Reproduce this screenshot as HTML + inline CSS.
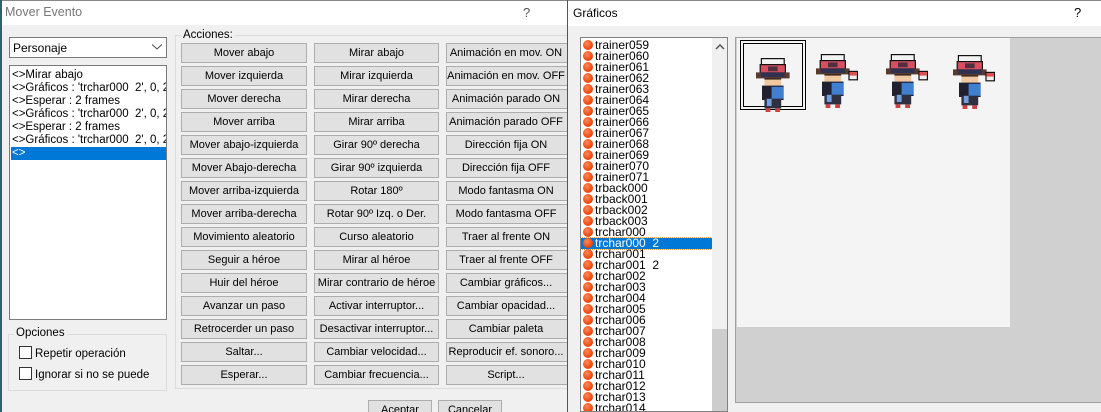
<!DOCTYPE html>
<html style="overflow:hidden;width:1101px;height:412px"><head><meta charset="utf-8"><style>
*{box-sizing:border-box;margin:0;padding:0}
body{width:1101px;height:412px;overflow:hidden;background:#f0f0f0;font-family:"Liberation Sans",sans-serif;font-size:12px;color:#000;position:relative}
.abs{position:absolute}
.btn{position:absolute;height:20px;background:#e1e1e1;border:1px solid #adadad;text-align:center;line-height:18px;font-size:11px;white-space:nowrap;overflow:hidden}
.li{height:13px;line-height:13px;white-space:nowrap}
.ri{height:11px;line-height:11px;white-space:nowrap;padding-left:2px;position:relative}
.ri i{display:inline-block;width:10px;height:10px;border-radius:50%;background:radial-gradient(circle at 40% 35%,#ff8a5a,#f04a10 60%,#c83000);vertical-align:-1px;margin-right:2px}
.cb{display:inline-block;width:13px;height:13px;border:1px solid #333;background:#fff;vertical-align:-2px;margin-right:3px}
</style></head><body>
<div class="abs" style="left:0;top:0;width:2px;height:412px;background:#2a6470"></div>
<div class="abs" style="left:2px;top:0;width:566px;height:25px;background:#fff;border-top:1px solid #888"></div>
<div class="abs" style="left:5px;top:5px;font-size:12.5px;color:#777">Mover Evento</div>
<div class="abs" style="left:523px;top:5px;font-size:13px;color:#555">?</div>

<div class="abs" style="left:9px;top:37px;width:158px;height:21px;background:#fff;border:1px solid #7a7a7a;padding:3px 3px;font-size:12px">Personaje
<svg class="abs" style="right:4px;top:6px" width="10" height="6"><path d="M0 0.5 L5 5 L10 0.5" stroke="#444" fill="none"/></svg></div>
<div class="abs" style="left:9px;top:65px;width:158px;height:255px;background:#fff;border:1px solid #7a7a7a;padding:3px 0 0 2px;font-size:11.5px;overflow:hidden">
<div class="li">&lt;&gt;Mirar abajo</div>
<div class="li">&lt;&gt;Gráficos : 'trchar000&nbsp; 2', 0, 2</div>
<div class="li">&lt;&gt;Esperar : 2 frames</div>
<div class="li">&lt;&gt;Gráficos : 'trchar000&nbsp; 2', 0, 2</div>
<div class="li">&lt;&gt;Esperar : 2 frames</div>
<div class="li">&lt;&gt;Gráficos : 'trchar000&nbsp; 2', 0, 2</div>
<div class="li" style="background:#0078d7;color:#fff;margin-left:-1px;padding-left:1px;width:155px">&lt;&gt;</div>
</div>

<div class="abs" style="left:8px;top:334px;width:159px;height:57px;border:1px solid #dcdcdc"></div>
<div class="abs" style="left:14px;top:327px;background:#f0f0f0;padding:0 2px;font-size:11.5px">Opciones</div>
<div class="abs" style="left:19px;top:346px;font-size:11.5px"><span class="cb"></span>Repetir operación</div>
<div class="abs" style="left:19px;top:367px;font-size:11.5px"><span class="cb"></span>Ignorar si no se puede</div>

<div class="abs" style="left:175px;top:35px;width:400px;height:354px;border:1px solid #dcdcdc"></div>
<div class="abs" style="left:181px;top:29px;background:#f0f0f0;padding:0 2px;font-size:11.5px">Acciones:</div>

<div id="btns"></div>

<div class="btn" style="left:368px;top:400px;width:64px;height:22px">Aceptar</div>
<div class="btn" style="left:438px;top:400px;width:64px;height:22px">Cancelar</div>

<div class="abs" style="left:567px;top:0;width:534px;height:412px;background:#f0f0f0;border-left:1px solid #555"></div>
<div class="abs" style="left:568px;top:0;width:533px;height:26px;background:#fff;border-top:1px solid #888"></div>
<div class="abs" style="left:573px;top:6px;font-size:12px">Gráficos</div>
<div class="abs" style="left:1074px;top:5px;font-size:13px">?</div>

<div class="abs" style="left:580px;top:37px;width:148px;height:375px;background:#fff;border:1px solid #828282;overflow:hidden">
<div class="abs" style="left:0;top:2px;width:131px;font-size:12px" id="rl"></div>
<div class="abs" style="left:131px;top:0;width:16px;height:380px;background:#f0f0f0"></div>
<svg class="abs" style="left:134px;top:6px" width="10" height="6"><path d="M1 5 L5 1 L9 5" stroke="#555" stroke-width="1.5" fill="none"/></svg>
<div class="abs" style="left:131px;top:291px;width:16px;height:90px;background:#cdcdcd"></div>
</div>

<div class="abs" style="left:735px;top:37px;width:366px;height:366px;background:#d0d0d0;border-top:1px solid #a0a0a0;border-left:1px solid #a0a0a0"></div>
<div class="abs" style="left:737px;top:38px;width:273px;height:289px;background:#f4f4f4"></div>
<div class="abs" style="left:740px;top:40px;width:66px;height:70px;border:1px solid #000;padding:2px"><div style="width:100%;height:100%;border:1px solid #000"></div></div>
<div class="abs" style="left:735px;top:402px;width:366px;height:10px;background:#f0f0f0;border-top:1px solid #a0a0a0"></div>

<svg class="abs" style="left:0;top:0" width="1101" height="412">
<defs>
<g id="sp">
<rect x="4" y="0" width="20" height="6" fill="#111"/>
<rect x="5" y="1" width="18" height="5" fill="#f2f2f2"/>
<rect x="3" y="5" width="22" height="8" fill="#111"/>
<rect x="4" y="6" width="20" height="6" fill="#d85060"/>
<rect x="10" y="7" width="8" height="4" fill="#503040"/>
<rect x="0" y="12" width="28" height="5" fill="#5a3a2a"/>
<rect x="4" y="12" width="20" height="4" fill="#303050"/>
<rect x="7" y="16" width="14" height="7" fill="#f0c8a0"/>
<rect x="7" y="16" width="14" height="2" fill="#402820"/>
<rect x="5" y="23" width="18" height="12" fill="#202030"/>
<rect x="13" y="24" width="10" height="10" fill="#4080d0"/>
<rect x="7" y="34" width="14" height="8" fill="#303040"/>
<rect x="9" y="34" width="4" height="6" fill="#70a0e0"/>
<rect x="8" y="42" width="4" height="3" fill="#d04040"/>
<rect x="16" y="42" width="4" height="3" fill="#d04040"/>
</g>
<g id="sp2">
<use href="#sp"/>
<rect x="27" y="14" width="8" height="8" fill="#111"/>
<rect x="28" y="15" width="6" height="6" fill="#f0f0f0"/>
<rect x="28" y="15" width="6" height="3" fill="#e05050"/>
</g>
</defs>
<use href="#sp" transform="translate(756,58) scale(1.2)"/>
<use href="#sp2" transform="translate(816,54) scale(1.2)"/>
<use href="#sp2" transform="translate(886,54) scale(1.2)"/>
<use href="#sp2" transform="translate(953,55) scale(1.2)"/>
</svg>

<script>
var c1=["Mover abajo","Mover izquierda","Mover derecha","Mover arriba","Mover abajo-izquierda","Mover Abajo-derecha","Mover arriba-izquierda","Mover arriba-derecha","Movimiento aleatorio","Seguir a héroe","Huir del héroe","Avanzar un paso","Retrocerder un paso","Saltar...","Esperar..."];
var c2=["Mirar abajo","Mirar izquierda","Mirar derecha","Mirar arriba","Girar 90º derecha","Girar 90º izquierda","Rotar 180º","Rotar 90º Izq. o Der.","Curso aleatorio","Mirar al héroe","Mirar contrario de héroe","Activar interruptor...","Desactivar interruptor...","Cambiar velocidad...","Cambiar frecuencia..."];
var c3=["Animación en mov. ON","Animación en mov. OFF","Animación parado ON","Animación parado OFF","Dirección fija ON","Dirección fija OFF","Modo fantasma ON","Modo fantasma OFF","Traer al frente ON","Traer al frente OFF","Cambiar gráficos...","Cambiar opacidad...","Cambiar paleta","Reproducir ef. sonoro...","Script..."];
var h="";
for(var i=0;i<15;i++){var y=43+i*23;
h+='<div class="btn" style="left:181px;top:'+y+'px;width:126px">'+c1[i]+'</div>';
h+='<div class="btn" style="left:314px;top:'+y+'px;width:125px">'+c2[i]+'</div>';
h+='<div class="btn" style="left:446px;top:'+y+'px;width:124px;padding-right:4px">'+c3[i]+'</div>';}
document.getElementById("btns").innerHTML=h;
var r=["trainer059","trainer060","trainer061","trainer062","trainer063","trainer064","trainer065","trainer066","trainer067","trainer068","trainer069","trainer070","trainer071","trback000","trback001","trback002","trback003","trchar000","trchar000&nbsp; 2","trchar001","trchar001&nbsp; 2","trchar002","trchar003","trchar004","trchar005","trchar006","trchar007","trchar008","trchar009","trchar010","trchar011","trchar012","trchar013","trchar014"];
var s="";
for(var j=0;j<r.length;j++){var sel=j==18;
s+='<div class="ri"'+(sel?' style="background:#0078d7;color:#fff;outline:1px dotted #f0a040"':'')+'><i></i>'+r[j]+'</div>';}
document.getElementById("rl").innerHTML=s;
</script>
</body></html>
